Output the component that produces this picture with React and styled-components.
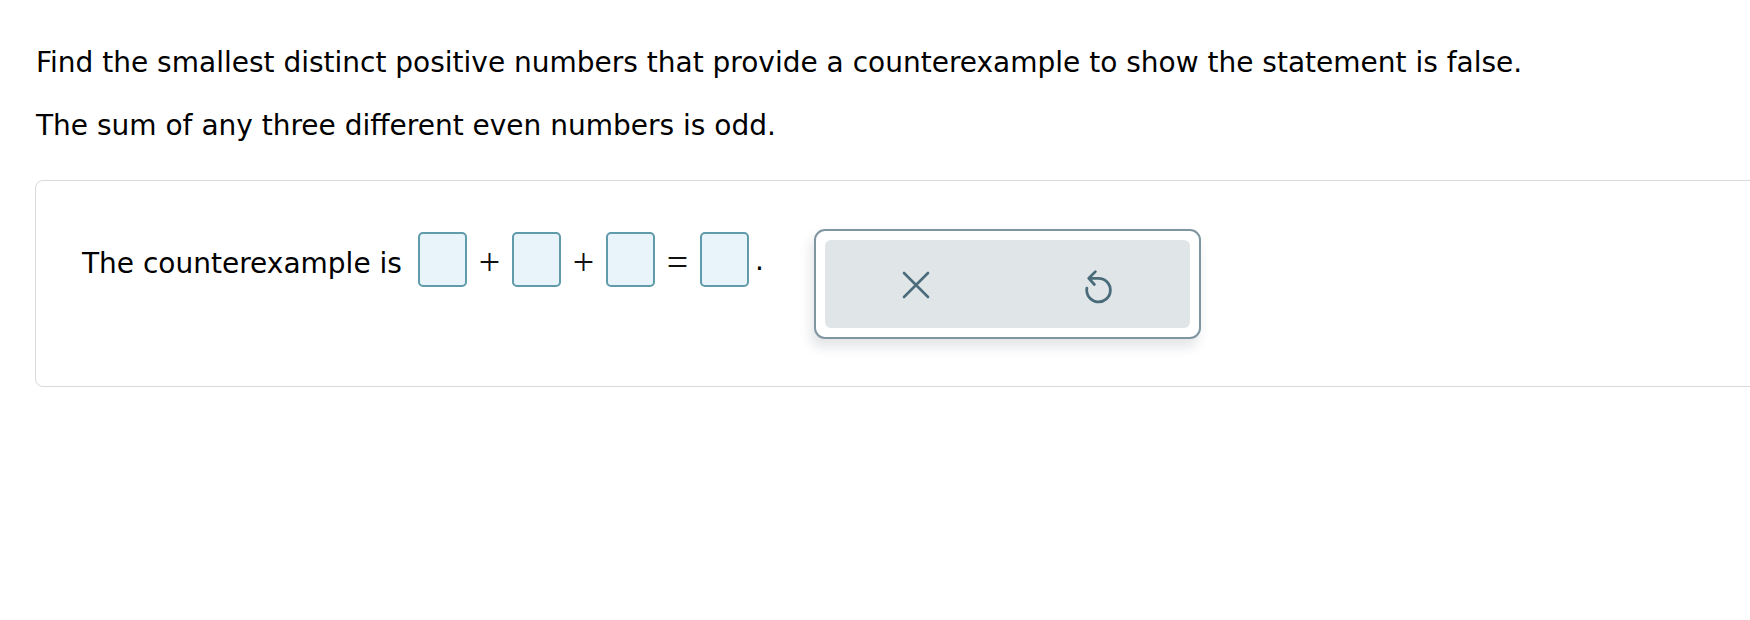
import React from "react";
import styled, { createGlobalStyle } from "styled-components";

const GlobalStyle = createGlobalStyle`
  html, body {
    margin: 0;
    padding: 0;
    background: #ffffff;
    overflow: hidden;
  }

  body {
    font-family: "DejaVu Sans", Verdana, sans-serif;
    color: #000000;
  }
`;

function ClearIcon() {
  return (
    <svg width="28" height="28" viewBox="0 0 28 28" fill="none">
      <path
        d="M2 2 L26 26 M26 2 L2 26"
        stroke="#4a6c7a"
        strokeWidth="2.6"
        strokeLinecap="round"
      />
    </svg>
  );
}

function UndoIcon() {
  return (
    <svg width="31" height="37" viewBox="0 0 30 36" fill="none">
      <path
        d="M6 11 H15 A11.5 11.5 0 1 1 3.7 20.5"
        stroke="#4a6c7a"
        strokeWidth="2.7"
        strokeLinecap="round"
        strokeLinejoin="round"
      />
      <path
        d="M12 4.5 L5.5 11 L11 17"
        stroke="#4a6c7a"
        strokeWidth="2.7"
        strokeLinecap="round"
        strokeLinejoin="round"
      />
    </svg>
  );
}

export default function App() {
  return (
    <>
      <GlobalStyle />
      <Page>
        <Question>
          <p>
            Find the smallest distinct positive numbers that provide a
            counterexample to show the statement is false.
          </p>
          <p>The sum of any three different even numbers is odd.</p>
        </Question>

        <AnswerCard>
          <Equation>
            <Label>The counterexample is</Label>
            <AnswerBox />
            <Operator>+</Operator>
            <AnswerBox />
            <Operator>+</Operator>
            <AnswerBox />
            <Operator>=</Operator>
            <AnswerBox />
            <Period>.</Period>
          </Equation>

          <Toolbar>
            <ToolbarInner>
              <ToolButton aria-label="Clear">
                <ClearIcon />
              </ToolButton>
              <ToolButton aria-label="Undo">
                <UndoIcon />
              </ToolButton>
            </ToolbarInner>
          </Toolbar>
        </AnswerCard>
      </Page>
    </>
  );
}

const Page = styled.div`
  padding-top: 47px;
`;

const Question = styled.div`
  padding-left: 36px;
  font-size: 28px;
  line-height: 32px;

  p {
    margin: 0 0 31px 0;
  }

  p:last-child {
    margin-bottom: 38px;
  }
`;

const AnswerCard = styled.div`
  width: 1800px;
  margin-left: 35px;
  box-sizing: border-box;
  display: flex;
  align-items: flex-start;
  padding: 48px 0 47px 46px;
  border: 1.5px solid #d4dade;
  border-radius: 8px;
`;

const Equation = styled.div`
  display: flex;
  align-items: center;
  height: 55px;
  margin-top: 3px;
  font-size: 28px;
`;

const Label = styled.span`
  margin-right: 16px;
  margin-top: 7px;
  white-space: nowrap;
`;

const AnswerBox = styled.div`
  width: 49px;
  height: 55px;
  box-sizing: border-box;
  border: 2px solid #5f9bab;
  border-radius: 5px;
  background: #e8f4f9;
`;

const Operator = styled.span`
  width: 45px;
  margin-top: 5px;
  text-align: center;
  font-family: "Liberation Serif", "Times New Roman", serif;
  font-size: 38px;
  line-height: 1;
  color: #111111;
`;

const Period = styled.span`
  margin-left: 6px;
  line-height: 1;
  align-self: flex-end;
  margin-bottom: 12px;
`;

const Toolbar = styled.div`
  margin-left: 50px;
  width: 387px;
  height: 110px;
  box-sizing: border-box;
  padding: 9px;
  border: 2px solid #7f96a0;
  border-radius: 11px;
  background: #ffffff;
  box-shadow: -3px 8px 12px rgba(30, 50, 60, 0.13);
`;

const ToolbarInner = styled.div`
  height: 100%;
  display: flex;
  background: #e0e5e8;
  border-radius: 6px;
`;

const ToolButton = styled.div`
  flex: 1;
  display: flex;
  align-items: center;
  justify-content: center;
  padding-top: 2px;
`;
